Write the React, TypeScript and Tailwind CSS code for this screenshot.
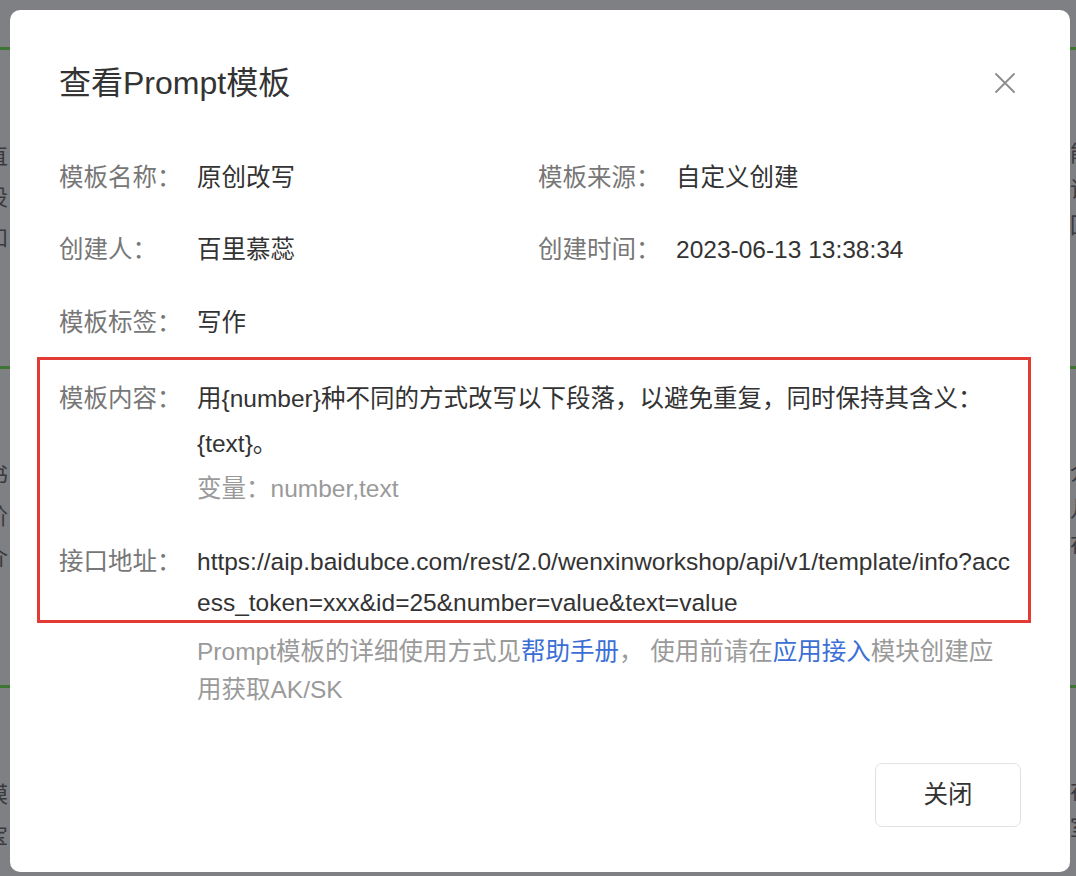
import React from 'react'

const font = { fontFamily: '"Liberation Sans", "Noto Sans CJK SC", sans-serif' }

// strips of the page that peek out around the modal
const backdropRows = [
  { lines: ['直', '设', '和'], rightLines: ['能', '词', '回'] },
  { lines: ['书', '阶', '介'], rightLines: ['介', '儿', '在'] },
  { lines: ['模', '宝'], rightLines: ['在', '室'] },
]

const InfoItem = ({ label, value }: { label: string; value: string }) => (
  <div className="flex leading-[42px]">
    <span className="w-[138px] shrink-0 text-[#777777]">{label}</span>
    <span className="text-[#333333]">{value}</span>
  </div>
)

export default function App() {
  return (
    <div className="relative w-[1076px] h-[876px] overflow-hidden bg-[#7f8084]" style={font}>
      {/* Dimmed page behind the dialog */}
      <div className="flex flex-col pt-[47px]">
        {backdropRows.map((row, i) => (
          <div key={i} className="flex justify-between h-[319px]">
            <div className="w-[10px] border-t-[3px] border-[#3d7630] pt-[86px] overflow-hidden">
              {row.lines.map((c, j) => (
                <div key={j} className="text-[22px] leading-[41px] text-[#3a3a3c] -ml-[14px]">{c}</div>
              ))}
            </div>
            <div className="w-[6px] border-t-[3px] border-[#3d7630] pt-[86px] overflow-hidden">
              {row.rightLines.map((c, j) => (
                <div key={j} className="text-[22px] leading-[36px] text-[#3a3a3c]">{c}</div>
              ))}
            </div>
          </div>
        ))}
      </div>

      {/* Dialog */}
      <div className="absolute left-[10px] top-[10px] w-[1060px] h-[862px] rounded-[10px] bg-white px-[49px] pt-[51px] flex flex-col text-[24.5px]">
        <div className="flex items-center justify-between h-[44px]">
          <h2 className="text-[32px] text-[#333333] font-normal">查看Prompt模板</h2>
          <button className="mr-[5px] w-[22px] h-[22px] flex items-center justify-center">
            <svg width="22" height="22" viewBox="0 0 22 22" fill="none" stroke="#8c8c8c" strokeWidth="1.8" strokeLinecap="round">
              <path d="M2 2 L20 20 M20 2 L2 20" />
            </svg>
          </button>
        </div>

        <div className="grid grid-cols-[479px_1fr] mt-[52px]">
          <InfoItem label="模板名称：" value="原创改写" />
          <InfoItem label="模板来源：" value="自定义创建" />
        </div>
        <div className="grid grid-cols-[479px_1fr] mt-[30px]">
          <InfoItem label="创建人：" value="百里慕蕊" />
          <InfoItem label="创建时间：" value="2023-06-13 13:38:34" />
        </div>
        <div className="mt-[31px]">
          <InfoItem label="模板标签：" value="写作" />
        </div>

        <div className="flex mt-[32px] leading-[45px]">
          <span className="w-[138px] shrink-0 text-[#777777]">模板内容：</span>
          <div className="flex-1">
            <p className="text-[#333333]">用{'{number}'}种不同的方式改写以下段落，以避免重复，同时保持其含义：{'{text}'}。</p>
            <p className="text-[#9a9a9a]">变量：number,text</p>
          </div>
        </div>

        <div className="flex mt-[30px] leading-[41px]">
          <span className="w-[138px] shrink-0 text-[#777777]">接口地址：</span>
          <p className="flex-1 min-w-0 break-all text-[#333333]">
            https://aip.baidubce.com/rest/2.0/wenxinworkshop/api/v1/template/info?access_token=xxx&amp;id=25&amp;number=value&amp;text=value
          </p>
        </div>

        <p className="ml-[138px] mr-[12px] mt-[10px] leading-[38px] text-[#9a9a9a]">
          Prompt模板的详细使用方式见<a className="text-[#3b6fd6]">帮助手册</a>， 使用前请在<a className="text-[#3b6fd6]">应用接入</a>模块创建应用获取AK/SK
        </p>

        <div className="flex justify-end mt-[54px]">
          <button className="w-[146px] h-[64px] rounded-[7px] border border-[#e2e2e2] bg-white text-[#333333] text-[24.5px]">
            关闭
          </button>
        </div>
      </div>

      {/* Red annotation box */}
      <div className="absolute left-[37px] top-[357px] w-[994px] h-[266px] border-[3px] border-[#e23b33]" />
    </div>
  )
}
